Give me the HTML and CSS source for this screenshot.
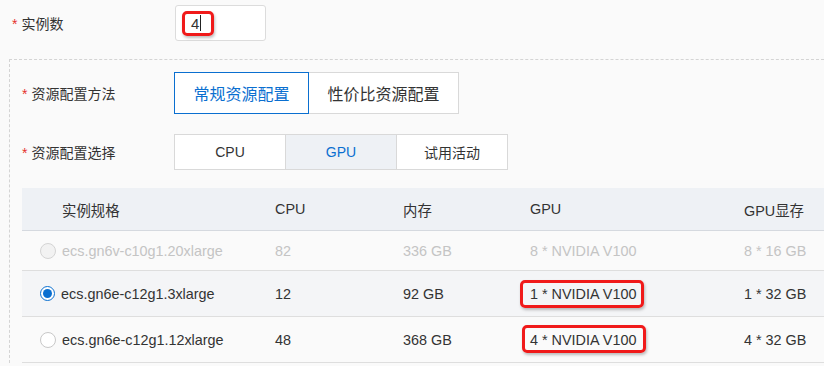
FILE: index.html
```html
<!DOCTYPE html>
<html lang="zh-CN">
<head>
    <meta charset="UTF-8">
    <title>实例配置</title>
    <link rel="stylesheet" href="styles.css">
</head>
<body>
    <div class="field top-field">
        <label class="field-label"><span class="req">*</span>实例数</label>
        <div class="count-input">
            <span class="mark mark-input">4<i class="caret"></i></span>
        </div>
    </div>

    <div class="group">
        <div class="field method-field">
            <label class="field-label"><span class="req">*</span>资源配置方法</label>
            <div class="seg seg-lg">
                <button class="seg-btn active">常规资源配置</button>
                <button class="seg-btn">性价比资源配置</button>
            </div>
        </div>

        <div class="field choice-field">
            <label class="field-label"><span class="req">*</span>资源配置选择</label>
            <div class="seg seg-sm">
                <button class="seg-btn">CPU</button>
                <button class="seg-btn picked">GPU</button>
                <button class="seg-btn">试用活动</button>
            </div>
        </div>

        <table class="spec-table">
            <colgroup>
                <col class="c-name">
                <col class="c-cpu">
                <col class="c-mem">
                <col class="c-gpu">
                <col class="c-vram">
            </colgroup>
            <thead>
                <tr>
                    <th class="name-head">实例规格</th>
                    <th>CPU</th>
                    <th>内存</th>
                    <th>GPU</th>
                    <th>GPU显存</th>
                </tr>
            </thead>
            <tbody>
                <tr class="disabled short">
                    <td><div class="name-cell"><span class="radio"></span>ecs.gn6v-c10g1.20xlarge</div></td>
                    <td>82</td>
                    <td>336 GB</td>
                    <td>8 * NVIDIA V100</td>
                    <td>8 * 16 GB</td>
                </tr>
                <tr class="selected">
                    <td><div class="name-cell"><span class="radio checked"></span>ecs.gn6e-c12g1.3xlarge</div></td>
                    <td>12</td>
                    <td>92 GB</td>
                    <td><span class="mark mark-a">1 * NVIDIA V100</span></td>
                    <td>1 * 32 GB</td>
                </tr>
                <tr>
                    <td><div class="name-cell"><span class="radio"></span>ecs.gn6e-c12g1.12xlarge</div></td>
                    <td>48</td>
                    <td>368 GB</td>
                    <td><span class="mark mark-b">4 * NVIDIA V100</span></td>
                    <td>4 * 32 GB</td>
                </tr>
            </tbody>
        </table>
    </div>
</body>
</html>
```

FILE: styles.css
```css
:root {
    --text-color: #333333;
    --muted-color: #c4c4c4;
    --blue: #0a6fd0;
    --line: #d9d9d9;
    --head-bg: #eef1f5;
    --mark-red: #f01a1a;
}

body {
    margin: 0;
    padding-top: 5px;
    background-color: #fafafa;
    color: var(--text-color);
    font-family: 'Liberation Sans', 'Noto Sans CJK SC', sans-serif;
    font-size: 14px;
    overflow: hidden;
    width: 824px;
    height: 366px;
}

.field {
    display: flex;
    align-items: center;
}

.field-label {
    flex: none;
    width: 152px;
    font-size: 14px;
    color: var(--text-color);
}

.req {
    color: #e5322d;
    margin-right: 4px;
}

.top-field {
    padding-left: 12px;
}

.top-field .field-label {
    width: 163px;
}

.count-input {
    width: 83px;
    height: 34px;
    border: 1px solid #dcdcdc;
    border-radius: 3px;
    background-color: #ffffff;
    display: flex;
    align-items: center;
    padding-left: 6px;
}

.mark {
    position: relative;
}

.mark::after {
    content: '';
    position: absolute;
    border: 3px solid var(--mark-red);
    border-radius: 5px;
    box-shadow: 1px 2px 3px rgba(0, 0, 0, 0.25);
}

.mark-input {
    display: inline-flex;
    align-items: center;
    height: 25px;
    padding-left: 9px;
    font-size: 15px;
    width: 23px;
}

.mark-input::after {
    left: 0;
    top: 0;
    right: 0;
    bottom: 0;
}

.caret {
    display: inline-block;
    width: 1px;
    height: 16px;
    background-color: #222;
    margin-left: 1px;
}

.group {
    margin-top: 18px;
    margin-left: 9px;
    border-top: 1px dashed #d4d4d4;
    border-left: 1px dashed #d4d4d4;
    padding: 12px 0 0 12px;
}

.seg {
    display: flex;
}

.seg-btn {
    margin: 0;
    border: 1px solid var(--line);
    background-color: #ffffff;
    color: var(--text-color);
    font-family: 'Liberation Sans', 'Noto Sans CJK SC', sans-serif;
    padding: 0;
    cursor: pointer;
    position: relative;
}

.seg-btn + .seg-btn {
    margin-left: -1px;
}

.seg-lg .seg-btn {
    height: 42px;
    font-size: 16px;
}

.seg-lg .seg-btn:first-child {
    width: 135px;
}

.seg-lg .seg-btn:last-child {
    width: 151px;
}

.seg-btn.active {
    border-color: var(--blue);
    color: var(--blue);
    z-index: 1;
}

.choice-field {
    margin-top: 20px;
}

.seg-sm .seg-btn {
    height: 36px;
    width: 112px;
    font-size: 14px;
}

.seg-btn.picked {
    background-color: var(--head-bg);
    color: var(--blue);
}

.spec-table {
    margin-top: 18px;
    width: 802px;
    table-layout: fixed;
    border-collapse: collapse;
    font-size: 14.4px;
}

.c-name { width: 253px; }
.c-cpu { width: 128px; }
.c-mem { width: 127px; }
.c-gpu { width: 214px; }

.spec-table th {
    background-color: var(--head-bg);
    height: 42px;
    text-align: left;
    font-weight: normal;
    padding: 0;
    border-bottom: 1px solid #d5d9df;
    white-space: nowrap;
}

.spec-table .name-head {
    padding-left: 40px;
}

.spec-table td {
    height: 45px;
    padding: 0;
    border-bottom: 1px solid #dedede;
    white-space: nowrap;
}

.spec-table tr.short td {
    height: 39px;
}

.spec-table tr.selected td {
    background-color: #f4f5f7;
}

.spec-table tr.disabled td {
    color: var(--muted-color);
}

.name-cell {
    display: flex;
    align-items: center;
    padding-left: 18px;
}

.radio {
    flex: none;
    width: 14px;
    height: 14px;
    border: 1px solid #c8c8c8;
    border-radius: 50%;
    background-color: #ffffff;
    margin-right: 6px;
    position: relative;
}

.disabled .radio {
    background-color: #f2f2f2;
    border-color: #d4d4d4;
}

.radio.checked {
    border: 1.5px solid var(--blue);
    width: 13px;
    height: 13px;
}

.radio.checked::after {
    content: '';
    position: absolute;
    left: 2px;
    top: 2px;
    width: 9px;
    height: 9px;
    border-radius: 50%;
    background-color: var(--blue);
}

.mark-a::after {
    left: -10px;
    right: -8px;
    top: -6px;
    bottom: -6px;
}

.mark-b::after {
    left: -8px;
    right: -10px;
    top: -7px;
    bottom: -5px;
}
```
